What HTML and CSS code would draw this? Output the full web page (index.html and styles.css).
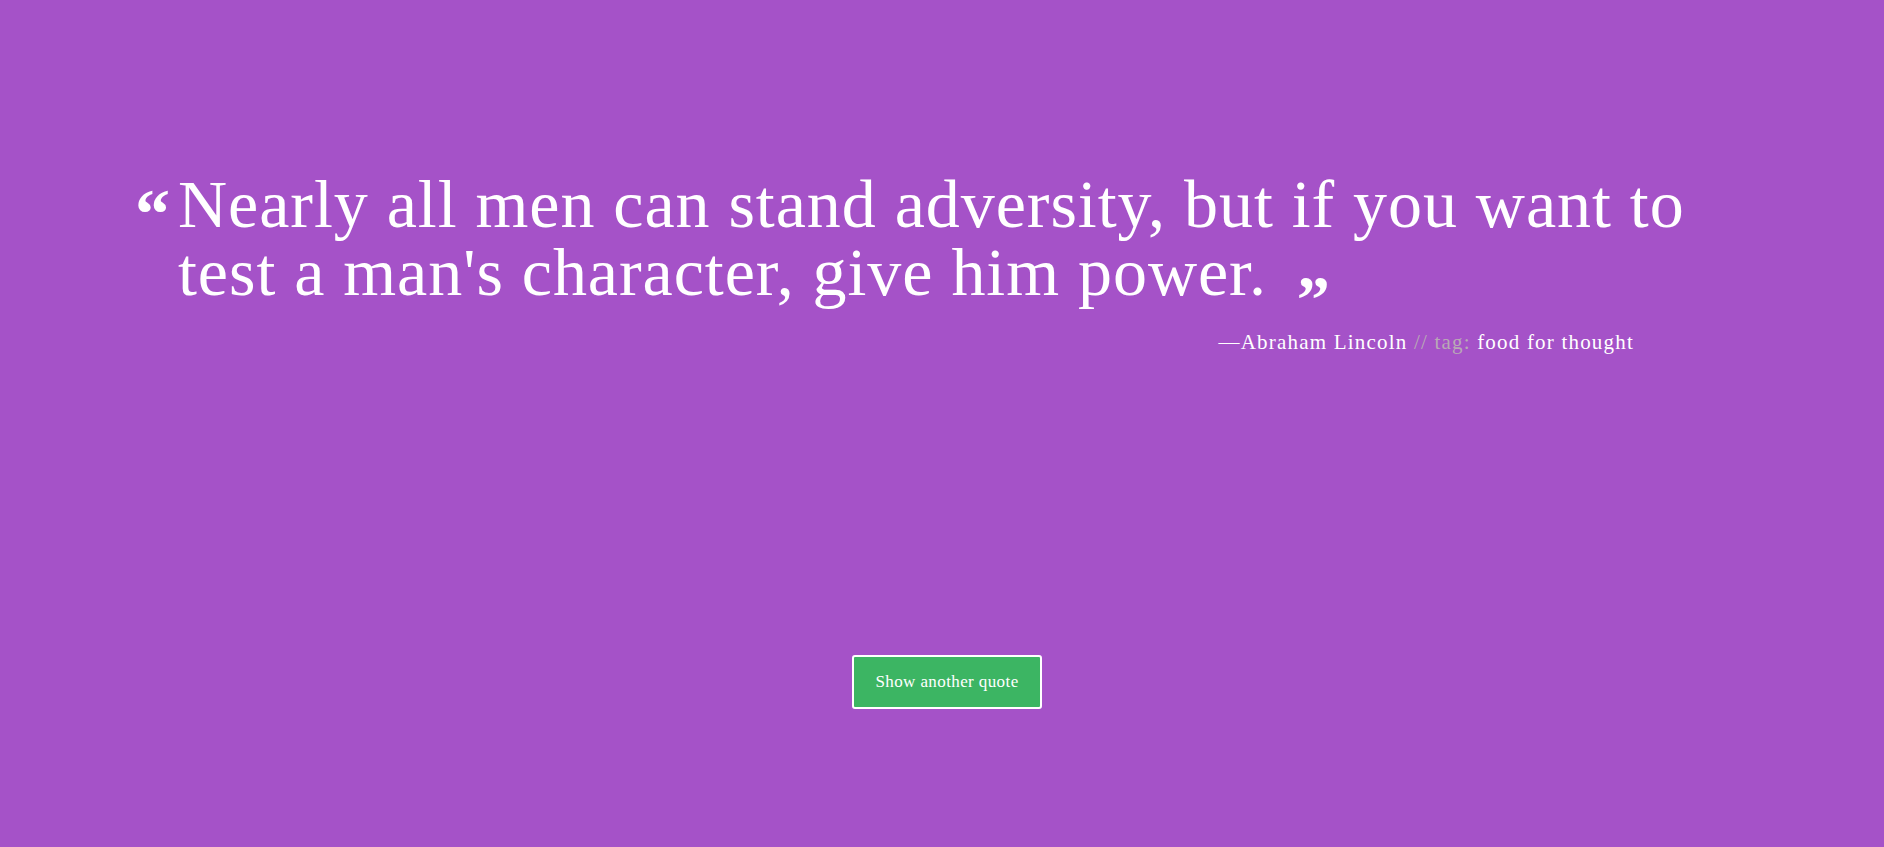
FILE: index.html
```html
<!DOCTYPE html>
<html lang="en">
<head>
<meta charset="utf-8">
<title>Random Quote Machine</title>
<link rel="stylesheet" href="styles.css">
</head>
<body>
<main class="page">
  <section class="quote-box">
    <blockquote class="quote">
      <span class="mark mark-open">&ldquo;</span>
      <p class="quote-text">Nearly all men can stand adversity, but if you want to test a man's character, give him power.<span class="mark mark-close">&rdquo;</span></p>
    </blockquote>
    <p class="attribution">&mdash;Abraham Lincoln <span class="muted">// tag:</span> food for thought</p>
  </section>
  <div class="actions">
    <button class="btn" type="button">Show another quote</button>
  </div>
</main>
</body>
</html>
```
FILE: styles.css
```css
html, body {
  margin: 0;
  padding: 0;
}
body {
  background: #a552c8;
  color: #ffffff;
  font-family: "Liberation Serif", "Times New Roman", serif;
}
.page {
  min-height: 847px;
  display: flex;
  flex-direction: column;
  box-sizing: border-box;
  padding: 170px 0 0 135px;
}
.quote-box {
  width: 1560px;
}
.quote {
  margin: 0;
  display: flex;
  align-items: flex-start;
}
.mark {
  font-weight: bold;
  letter-spacing: 0;
}
.mark-open {
  font-size: 70px;
  line-height: 1;
  width: 43px;
  flex: none;
  padding-top: 9px;
}
.mark-close {
  font-size: 66px;
  line-height: 0;
  margin-left: 30px;
  vertical-align: -26px;
}
.quote-text {
  margin: 0;
  font-size: 68px;
  line-height: 68px;
  letter-spacing: 0.95px;
  width: 1540px;
}
.attribution {
  margin: 24px 0 0;
  width: 1499px;
  text-align: right;
  font-size: 21px;
  letter-spacing: 1.2px;
}
.muted {
  color: #b9aab5;
}
.actions {
  display: flex;
  justify-content: center;
  margin-top: 300px;
  margin-left: -125px;
}
.btn {
  width: 190px;
  height: 54px;
  background: #3cb563;
  color: #ffffff;
  border: 2px solid #ffffff;
  border-radius: 3px;
  font-family: "Liberation Serif", "Times New Roman", serif;
  font-size: 17px;
  letter-spacing: 0.4px;
  cursor: pointer;
}
```
